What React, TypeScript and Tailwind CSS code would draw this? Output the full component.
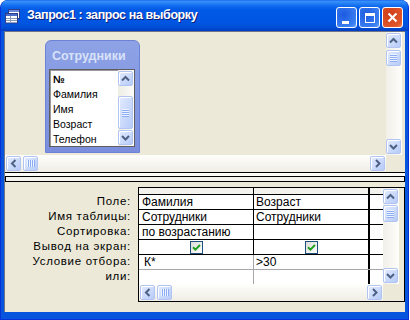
import React from "react";

type Dir = "up" | "down" | "left" | "right";

function Arrow({ dir }: { dir: Dir }) {
  const horiz = dir === "left" || dir === "right";
  const d =
    dir === "up"
      ? "M1 5.5 L4.5 2 L8 5.5"
      : dir === "down"
      ? "M1 2 L4.5 5.5 L8 2"
      : dir === "left"
      ? "M5.5 1 L2 4.5 L5.5 8"
      : "M2 1 L5.5 4.5 L2 8";
  return (
    <svg width={horiz ? 7 : 9} height={horiz ? 9 : 7} viewBox={horiz ? "0 0 7 9" : "0 0 9 7"}>
      <path d={d} fill="none" stroke="#4D6185" strokeWidth="2" />
    </svg>
  );
}

function SBtn({ dir }: { dir: Dir }) {
  return (
    <div className="w-[15px] h-[15px] shrink-0 rounded-[2px] border border-[#B2C5F2] bg-linear-to-br from-[#E3EBFE] to-[#B7CBF8] shadow-[inset_1px_1px_0_#ffffff] flex items-center justify-center">
      <Arrow dir={dir} />
    </div>
  );
}

function Grip({ vertical }: { vertical: boolean }) {
  if (vertical) {
    return (
      <svg width="7" height="8" viewBox="0 0 7 8">
        {[0, 2, 4, 6].map((y) => (
          <g key={y}>
            <rect x="0" y={y} width="7" height="1" fill="#EEF4FE" />
            <rect x="0" y={y + 1} width="7" height="1" fill="#8CACF3" />
          </g>
        ))}
      </svg>
    );
  }
  return (
    <svg width="8" height="7" viewBox="0 0 8 7">
      {[0, 2, 4, 6].map((x) => (
        <g key={x}>
          <rect x={x} y="0" width="1" height="7" fill="#EEF4FE" />
          <rect x={x + 1} y="0" width="1" height="7" fill="#8CACF3" />
        </g>
      ))}
    </svg>
  );
}

function VThumb({ h }: { h: string }) {
  return (
    <div className={`w-[15px] ${h} shrink-0 rounded-[2px] border border-[#B2C5F2] bg-linear-to-br from-[#E3EBFE] to-[#B7CBF8] shadow-[inset_1px_1px_0_#ffffff] flex items-center justify-center`}>
      <Grip vertical />
    </div>
  );
}

function HThumb() {
  return (
    <div className="w-[15px] h-[15px] shrink-0 rounded-[2px] border border-[#B2C5F2] bg-linear-to-br from-[#E3EBFE] to-[#B7CBF8] shadow-[inset_1px_1px_0_#ffffff] flex items-center justify-center">
      <Grip vertical={false} />
    </div>
  );
}

function CheckBox() {
  return (
    <div className="w-[13px] h-[13px] border border-[#1C5180] bg-linear-to-br from-[#DCDCD7] to-white flex items-center justify-center">
      <svg width="9" height="9" viewBox="0 0 9 9">
        <path d="M1 4.3 L3.4 6.7 L8 2" stroke="#21A121" strokeWidth="2" fill="none" />
      </svg>
    </div>
  );
}

function TitleIcon() {
  return (
    <svg width="16" height="16" viewBox="0 0 16 16">
      <rect x="3.5" y="1.5" width="11" height="9" fill="#ffffff" stroke="#2C3E8C" />
      <rect x="4" y="2" width="10" height="2" fill="#6D8BDA" />
      <rect x="0.5" y="5.5" width="12" height="9.5" fill="#ffffff" stroke="#2C3E8C" />
      <rect x="1" y="6" width="11" height="2" fill="#4A6CC8" />
      <line x1="1" y1="10.5" x2="12" y2="10.5" stroke="#8A9AB8" />
      <line x1="1" y1="12.5" x2="12" y2="12.5" stroke="#8A9AB8" />
      <line x1="5.5" y1="8" x2="5.5" y2="14.5" stroke="#8A9AB8" />
    </svg>
  );
}

const rows = [
  { label: "Поле:", c1: "Фамилия", c2: "Возраст" },
  { label: "Имя таблицы:", c1: "Сотрудники", c2: "Сотрудники" },
  { label: "Сортировка:", c1: "по возрастанию", c2: "" },
  { label: "Вывод на экран:", check: true },
  { label: "Условие отбора:", c1: "К*", c2: ">30", gray: true, indent: true },
  { label: "или:", c1: "", c2: "", gray: true, topGray: true },
];

export default function App() {
  return (
    <div className="w-[410px] h-[320px] bg-white font-['Liberation_Sans',Arial,sans-serif] text-black overflow-hidden">
      <div className="w-[409px] h-[320px] flex flex-col rounded-t-[8px] bg-[#0855DD] border-x border-b border-[#0831D9] overflow-hidden">
        {/* Title bar */}
        <div className="h-[31px] shrink-0 flex items-center pl-[4px] pr-[5px] bg-[linear-gradient(to_bottom,#0A5CE9_0px,#3D91F9_1px,#2A84F6_3px,#0F6BEF_6px,#0059E5_10px,#0056E2_22px,#004FD8_27px,#003DC2_31px)]">
          <TitleIcon />
          <div className="ml-[6px] text-[12.5px] tracking-[-0.4px] font-bold text-white leading-none [text-shadow:1px_1px_0_#0F1D7A] whitespace-nowrap">
            Запрос1 : запрос на выборку
          </div>
          <div className="ml-auto self-start mt-[7px] flex gap-[2px]">
            <div className="w-[21px] h-[21px] rounded-[3px] border border-white bg-[radial-gradient(circle_at_35%_35%,#1C5AE0,#3A7FF2_75%,#6AA3FA)] flex items-end pl-[5px] pb-[3px]">
              <div className="w-[7px] h-[3px] bg-white" />
            </div>
            <div className="w-[21px] h-[21px] rounded-[3px] border border-white bg-[radial-gradient(circle_at_35%_35%,#1C5AE0,#3A7FF2_75%,#6AA3FA)] flex items-center justify-center">
              <div className="w-[10px] h-[10px] border-white border-t-[3px] border-x border-b" />
            </div>
            <div className="w-[21px] h-[21px] rounded-[3px] border border-white bg-[radial-gradient(circle_at_35%_35%,#CF3C15,#E0562D_75%,#F08B66)] flex items-center justify-center">
              <svg width="11" height="11" viewBox="0 0 11 11">
                <path d="M1.5 1.5 L9.5 9.5 M9.5 1.5 L1.5 9.5" stroke="#ffffff" strokeWidth="2.2" />
              </svg>
            </div>
          </div>
        </div>

        {/* Client area */}
        <div className="mx-[3px] mb-[7px] h-[281px] flex flex-col bg-[#ECE9D8] border-l border-t border-[#6F7488]">
          {/* Upper pane */}
          <div className="h-[140px] flex flex-col">
            <div className="h-[123px] flex">
              <div className="w-[381px] relative">
                <div className="absolute left-[40px] top-[8px] w-[95px] h-[113px] rounded-t-[6px] bg-linear-to-b from-[#8EA2E6] to-[#7A8EDD] border border-[#6D82D6] flex flex-col">
                  <div className="h-[28px] pt-[8px] pl-[6px] text-[12.5px] leading-[15px] font-bold text-[#D8E2F8] whitespace-nowrap">
                    Сотрудники
                  </div>
                  <div className="ml-[3px] w-[86px] h-[78px] bg-white border border-[#5E5E5E] shadow-[inset_1px_1px_0_#9A9A9A] flex">
                    <div className="flex-1 pl-[3px] pt-[2px] overflow-hidden text-[10.5px] leading-[15px] whitespace-nowrap">
                      <div className="font-bold">№</div>
                      <div>Фамилия</div>
                      <div>Имя</div>
                      <div>Возраст</div>
                      <div>Телефон</div>
                    </div>
                    <div className="w-[16px] py-[1px] flex flex-col bg-linear-to-r from-[#EEEDE5] to-[#FBFBF9]">
                      <SBtn dir="up" />
                      <div className="mt-[10px]">
                        <VThumb h="h-[33px]" />
                      </div>
                      <div className="flex-1" />
                      <SBtn dir="down" />
                    </div>
                  </div>
                </div>
              </div>
              <div className="w-[16px] py-[1px] flex flex-col bg-linear-to-r from-[#F1EFE8] to-[#FEFEFB]">
                <SBtn dir="up" />
                <div className="mt-[2px]">
                  <VThumb h="h-[16px]" />
                </div>
                <div className="flex-1" />
                <SBtn dir="down" />
              </div>
              <div className="flex-1" />
            </div>
            <div className="h-[17px] flex">
              <div className="w-[381px] p-[1px] flex gap-[2px] bg-linear-to-b from-[#FEFEFB] to-[#EFEDE4]">
                <SBtn dir="left" />
                <HThumb />
                <div className="flex-1" />
                <SBtn dir="right" />
              </div>
              <div className="flex-1" />
            </div>
          </div>

          {/* Splitter */}
          <div className="h-[1px] bg-black" />
          <div className="h-[3px] bg-[#FBFBF8]" />
          <div className="h-[6px] border border-black bg-[#F3F2EC]" />

          {/* Lower pane */}
          <div className="h-[130px] pt-[5px] flex">
            <div className="w-[133px] pt-[7px] pr-[7px] text-right text-[11.5px] tracking-[0.7px] leading-[15px] whitespace-nowrap">
              {rows.map((r) => (
                <div key={r.label} className="h-[15px]">
                  {r.label}
                </div>
              ))}
            </div>
            <div className="w-[267px] h-[115px] border border-black flex">
              <div className="w-[244px] flex flex-col">
                <div className="h-[6px] flex bg-[#F3F2EC]">
                  <div className="w-[115px] border-r border-black" />
                  <div className="w-[116px] border-r-2 border-black" />
                  <div className="flex-1" />
                </div>
                {rows.map((r) => (
                  <div
                    key={r.label}
                    className={`h-[15px] flex bg-white text-[12px] leading-[14px] whitespace-nowrap border-t ${
                      r.topGray ? "border-[#A7A6AA]" : "border-black"
                    }`}
                  >
                    <div
                      className={`w-[115px] h-[14px] overflow-hidden border-r flex items-center ${
                        r.gray ? "border-[#A7A6AA]" : "border-black"
                      } ${r.check ? "justify-center" : r.indent ? "pl-[5px]" : "pl-[3px]"}`}
                    >
                      {r.check ? <CheckBox /> : r.c1}
                    </div>
                    <div
                      className={`w-[116px] h-[14px] overflow-hidden border-r-2 border-black flex items-center ${
                        r.check ? "justify-center" : "pl-[2px]"
                      }`}
                    >
                      {r.check ? <CheckBox /> : r.c2}
                    </div>
                    <div className="flex-1" />
                  </div>
                ))}
                <div className="h-[17px] p-[1px] flex gap-[2px] bg-linear-to-b from-[#FEFEFB] to-[#EFEDE4]">
                  <SBtn dir="left" />
                  <HThumb />
                  <div className="flex-1" />
                  <SBtn dir="right" />
                </div>
              </div>
              <div className="flex-1 flex">
                <div className="w-[16px] h-[96px] py-[1px] flex flex-col bg-linear-to-r from-[#F1EFE8] to-[#FEFEFB]">
                  <SBtn dir="up" />
                  <div className="mt-[1px]">
                    <VThumb h="h-[17px]" />
                  </div>
                  <div className="flex-1" />
                  <SBtn dir="down" />
                </div>
              </div>
            </div>
          </div>
        </div>
      </div>
    </div>
  );
}
